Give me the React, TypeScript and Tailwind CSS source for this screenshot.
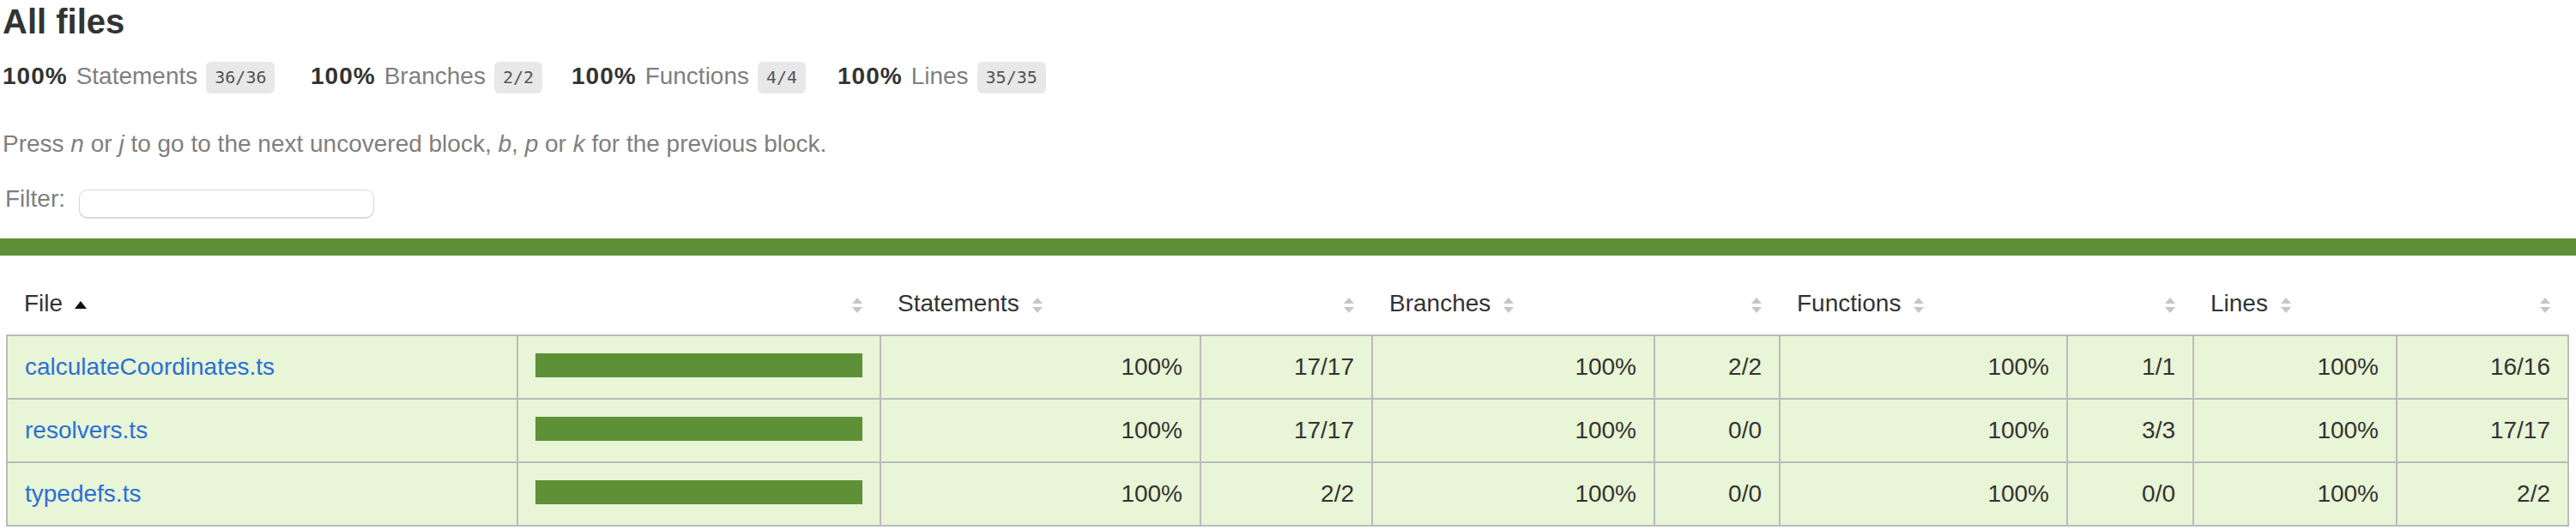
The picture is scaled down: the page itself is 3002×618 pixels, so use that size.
import React from "react";

const SortBoth = () => (
  <svg width="14" height="20" viewBox="0 0 14 20" className="inline-block ml-[14px]">
    <path d="M7 1 L13 8 H1 Z" fill="#c6c6c6" />
    <path d="M1 12 H13 L7 19 Z" fill="#c6c6c6" />
  </svg>
);

const SortAsc = () => (
  <svg width="14" height="20" viewBox="0 0 14 20" className="inline-block ml-[14px]">
    <path d="M7 5 L14 14 H0 Z" fill="#111111" />
  </svg>
);

const Summary = ({ label, frac, w }: { label: string; frac: string; w: string }) => (
  <div className={w + " text-[28px] leading-[32px] whitespace-nowrap"}>
    <span className="font-bold tracking-[1px]">100%</span>
    <span className="ml-[10px] text-[#7f7f7f]">{label}</span>
    <span className="ml-[10px] inline-block align-middle rounded-[6px] bg-[#e8e8e8] px-[10px] py-[8px] font-['DejaVu_Sans_Mono','Liberation_Mono',monospace] text-[20px] leading-[21px] text-[#555]">
      {frac}
    </span>
  </div>
);

type Row = {
  file: string;
  s: string;
  b: string;
  f: string;
  l: string;
};

const rows: Row[] = [
  { file: "calculateCoordinates.ts", s: "17/17", b: "2/2", f: "1/1", l: "16/16" },
  { file: "resolvers.ts", s: "17/17", b: "0/0", f: "3/3", l: "17/17" },
  { file: "typedefs.ts", s: "2/2", b: "0/0", f: "0/0", l: "2/2" },
];

export default function App() {
  return (
    <div className="min-h-[618px] w-full bg-white text-[#333] font-['Liberation_Sans',Arial,sans-serif]">
      <div className="pl-[3px]">
        <h1 className="pt-[2px] text-[40px] font-bold leading-[46px]">All files</h1>
        <div className="flex pt-[24px]">
          <Summary label="Statements" frac="36/36" w="w-[359px]" />
          <Summary label="Branches" frac="2/2" w="w-[304px]" />
          <Summary label="Functions" frac="4/4" w="w-[310px]" />
          <Summary label="Lines" frac="35/35" w="w-[280px]" />
        </div>
        <p className="mt-[43px] text-[28px] leading-[32px] text-[#7f7f7f]">
          Press <em>n</em> or <em>j</em> to go to the next uncovered block, <em>b</em>, <em>p</em> or{" "}
          <em>k</em> for the previous block.
        </p>
        <div className="mt-[32px] flex items-start pl-[3px] text-[28px] leading-[32px] text-[#7f7f7f]">
          <span>Filter:</span>
          <input
            type="search"
            className="ml-[16px] mt-[5px] h-[33px] w-[344px] appearance-none rounded-[10px] border border-[#d8d8d8] bg-white shadow-[0_1px_1px_rgba(0,0,0,0.15)] outline-none"
          />
        </div>
      </div>
      <div className="mt-[24px] h-[20px] bg-[#5e9137]" />
      <table className="ml-[7px] mt-[20px] w-[2987px] table-fixed border-collapse text-[28px] leading-[32px]">
        <colgroup>
          <col className="w-[595px]" />
          <col className="w-[423px]" />
          <col className="w-[373px]" />
          <col className="w-[200px]" />
          <col className="w-[329px]" />
          <col className="w-[146px]" />
          <col className="w-[335px]" />
          <col className="w-[147px]" />
          <col className="w-[237px]" />
          <col className="w-[200px]" />
        </colgroup>
        <thead>
          <tr>
            <th className="p-[20px] text-left font-normal whitespace-nowrap">
              File
              <SortAsc />
            </th>
            <th className="p-[20px] text-right font-normal">
              <SortBoth />
            </th>
            <th className="p-[20px] text-left font-normal whitespace-nowrap">
              Statements
              <SortBoth />
            </th>
            <th className="p-[20px] text-right font-normal">
              <SortBoth />
            </th>
            <th className="p-[20px] text-left font-normal whitespace-nowrap">
              Branches
              <SortBoth />
            </th>
            <th className="p-[20px] text-right font-normal">
              <SortBoth />
            </th>
            <th className="p-[20px] text-left font-normal whitespace-nowrap">
              Functions
              <SortBoth />
            </th>
            <th className="p-[20px] text-right font-normal">
              <SortBoth />
            </th>
            <th className="p-[20px] text-left font-normal whitespace-nowrap">
              Lines
              <SortBoth />
            </th>
            <th className="p-[20px] text-right font-normal">
              <SortBoth />
            </th>
          </tr>
        </thead>
        <tbody className="border-2 border-[#bbbbbb]">
          {rows.map((r) => (
            <tr key={r.file} className="border-b-2 border-[#bbbbbb] bg-[#e8f5d6]">
              <td className="border-r-2 border-[#bbbbbb] p-[20px] align-top whitespace-nowrap">
                <a href="#" className="text-[#2a6fd6]">
                  {r.file}
                </a>
              </td>
              <td className="border-r-2 border-[#bbbbbb] p-[20px] align-top">
                <div className="h-[28px] w-full bg-[#5e9137]" />
              </td>
              <td className="border-r-2 border-[#bbbbbb] p-[20px] text-right align-top">100%</td>
              <td className="border-r-2 border-[#bbbbbb] p-[20px] text-right align-top">{r.s}</td>
              <td className="border-r-2 border-[#bbbbbb] p-[20px] text-right align-top">100%</td>
              <td className="border-r-2 border-[#bbbbbb] p-[20px] text-right align-top">{r.b}</td>
              <td className="border-r-2 border-[#bbbbbb] p-[20px] text-right align-top">100%</td>
              <td className="border-r-2 border-[#bbbbbb] p-[20px] text-right align-top">{r.f}</td>
              <td className="border-r-2 border-[#bbbbbb] p-[20px] text-right align-top">100%</td>
              <td className="p-[20px] text-right align-top">{r.l}</td>
            </tr>
          ))}
        </tbody>
      </table>
    </div>
  );
}
